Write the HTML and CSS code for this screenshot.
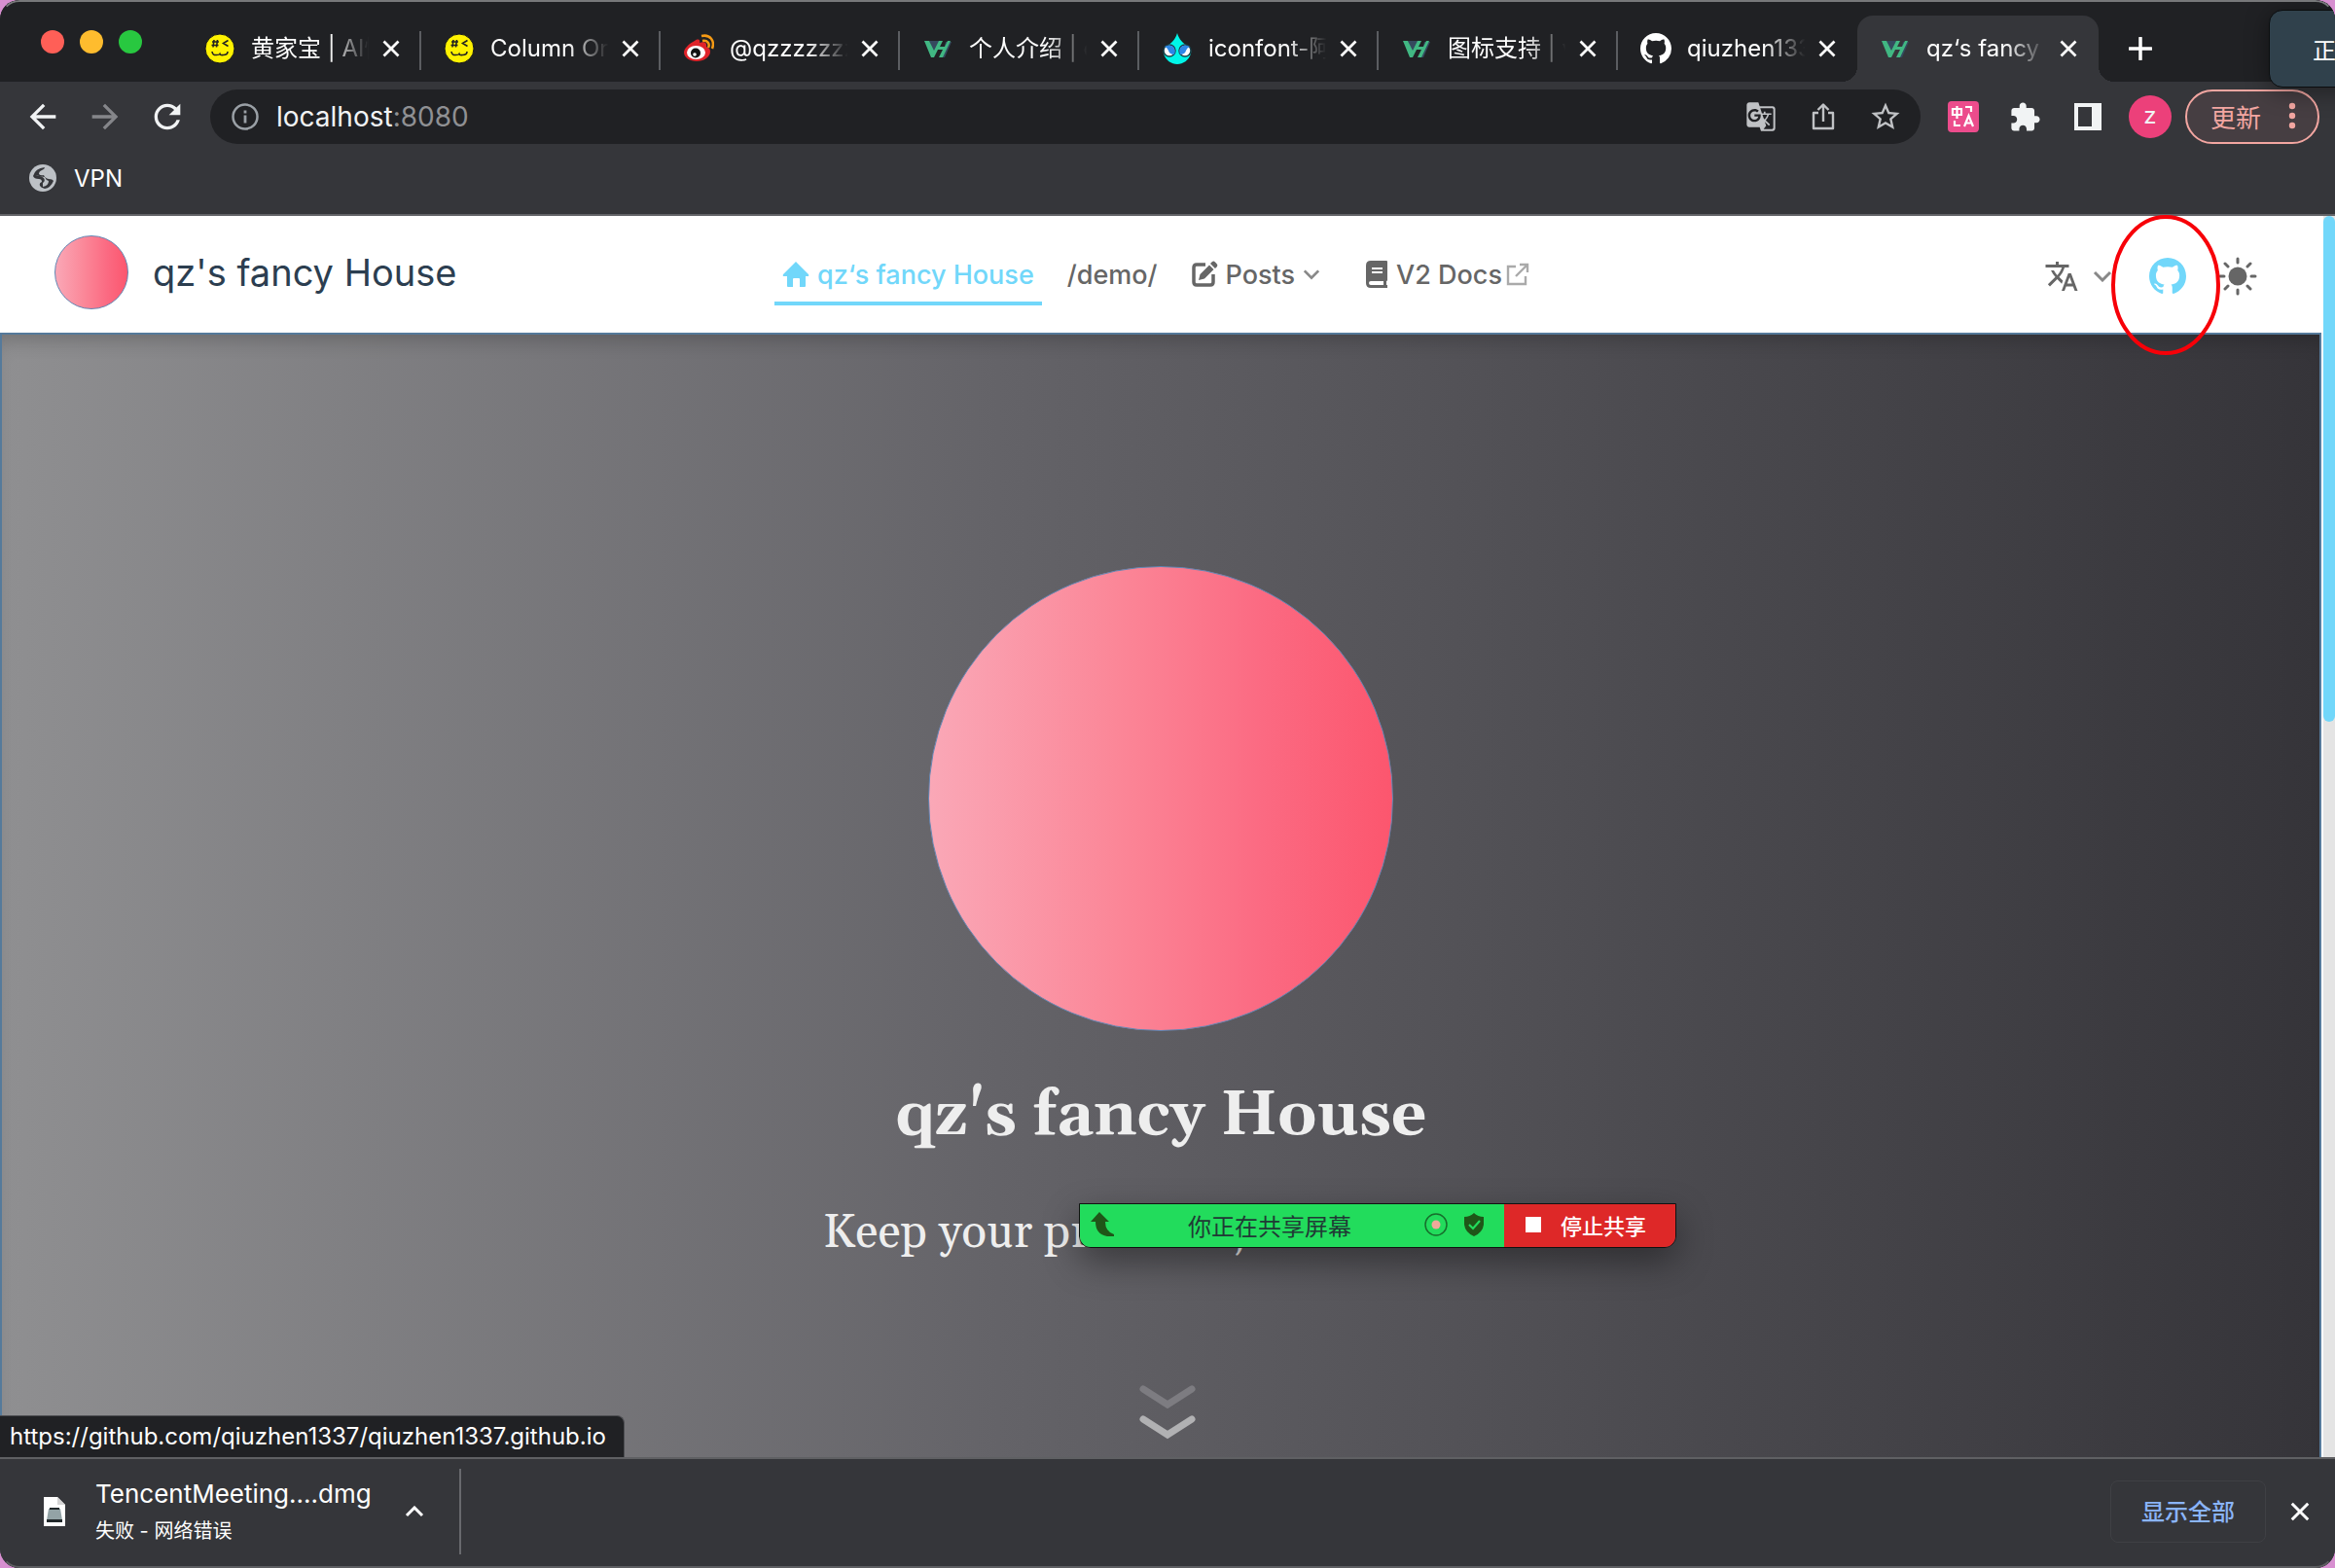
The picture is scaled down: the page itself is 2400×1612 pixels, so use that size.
FILE: index.html
```html
<!DOCTYPE html>
<html lang="zh-CN">
<head>
<meta charset="utf-8">
<title>qz's fancy House</title>
<link rel="stylesheet" href="styles.css">
</head>
<body>
<svg class="defs" aria-hidden="true">
  <symbol id="close" viewBox="0 0 16 16"><path d="M2 2 14 14M14 2 2 14" fill="none" stroke="currentColor" stroke-width="2.2"/></symbol>
  <symbol id="face" viewBox="0 0 32 32"><circle cx="16" cy="16" r="15" fill="#fff200" stroke="#17181a" stroke-width="1"/><path d="M8 9h7M7.500 12.500h7M10 7l-1 7.500M13.500 7l-1 7.500M24.500 7.500 19.500 10.500 24.500 13.500M8 19q.5 4 4.500 3.500 3 0 3.500-1 .5 1.500 3.500 1 4.500 0 4.500-3.500" fill="none" stroke="#222" stroke-width="1.600"/></symbol>
  <symbol id="vh" viewBox="0 0 32 32"><path d="M7 8h11l-5 11h-2z" fill="#35495e"/><path d="M24 9h6l-7 16h-3z" fill="#35495e"/><path d="M2 8h5l5 10 5-10h4l-3 6h5l3-6h3l-8 17h-4l4-8h-5l-4 8h-3z" fill="#41b883"/></symbol>
  <symbol id="github" viewBox="0 0 16 16"><path fill="currentColor" d="M8 0C3.580 0 0 3.580 0 8c0 3.540 2.290 6.530 5.470 7.590.4.070.55-.17.55-.38 0-.19-.01-.82-.01-1.490-2.010.37-2.530-.49-2.690-.94-.09-.23-.48-.94-.82-1.130-.28-.15-.68-.52-.01-.53.63-.01 1.080.58 1.230.82.72 1.210 1.870.87 2.330.66.07-.52.28-.87.51-1.070-1.780-.2-3.640-.89-3.640-3.950 0-.87.31-1.590.82-2.150-.08-.2-.36-1.020.08-2.120 0 0 .67-.21 2.200.82.64-.18 1.320-.27 2-.27s1.360.09 2 .27c1.530-1.040 2.200-.82 2.200-.82.44 1.100.16 1.920.08 2.120.51.56.82 1.270.82 2.150 0 3.070-1.870 3.750-3.650 3.950.29.25.54.73.54 1.480 0 1.070-.01 1.930-.01 2.200 0 .21.15.46.55.38A8.010 8.010 0 0 0 16 8c0-4.420-3.580-8-8-8z"/></symbol>
  <symbol id="down" viewBox="0 0 20 12"><path d="M2 2l8 8 8-8" fill="none" stroke="currentColor" stroke-width="3"/></symbol>
</svg>

<header class="browser">
  <div class="tabstrip">
    <div class="lights"><i class="light red"></i><i class="light amber"></i><i class="light green"></i></div>
    <div class="tabs">
      <div class="tab"><svg class="fav"><use href="#face"/></svg><span class="tab-title">黄家宝 | AI情</span><button class="icon-btn" aria-label="关闭"><svg class="x"><use href="#close"/></svg></button></div>
      <div class="tab"><svg class="fav"><use href="#face"/></svg><span class="tab-title">Column Ord</span><button class="icon-btn" aria-label="关闭"><svg class="x"><use href="#close"/></svg></button></div>
      <div class="tab"><svg class="fav" viewBox="0 0 32 32"><path d="M12 8c4-3 6-1 5 2 5-2 8 0 7 4 3 1 4 3 4 5 0 6-7 10-14 10S1 25 1 20c0-4 5-9 11-12z" fill="#e02329"/><ellipse cx="13.500" cy="20" rx="9.500" ry="7" fill="#fff"/><circle cx="13" cy="20.500" r="5" fill="#111"/><circle cx="12" cy="22" r="1.800" fill="#fff"/><path d="M20 8c5-1 8 3 6 7M19 3c9-2 14 5 11 13" fill="none" stroke="#f59a14" stroke-width="2.500"/></svg><span class="tab-title">@qzzzzzzz</span><button class="icon-btn" aria-label="关闭"><svg class="x"><use href="#close"/></svg></button></div>
      <div class="tab"><svg class="fav"><use href="#vh"/></svg><span class="tab-title">个人介绍 | q</span><button class="icon-btn" aria-label="关闭"><svg class="x"><use href="#close"/></svg></button></div>
      <div class="tab"><svg class="fav" viewBox="0 0 32 32"><path d="M16 0c2 7 6 10 10 13q5 3 4 8c-2 7-8 11-14 11S4 28 2 21q-1-5 4-8c4-3 8-6 10-13z" fill="#00f5e8"/><g stroke="#1a3f48" stroke-width="1.500"><circle cx="8" cy="18" r="6" fill="#fff"/><circle cx="24" cy="18" r="6" fill="#fff"/></g><path d="M3 14q5-3 9 0 3 4 1 8-5 0-6-4-1-3-4-4zM29 14q-5-3-9 0-3 4-1 8 5 0 6-4 1-3 4-4z" fill="#2c86e8"/></svg><span class="tab-title">iconfont-阿</span><button class="icon-btn" aria-label="关闭"><svg class="x"><use href="#close"/></svg></button></div>
      <div class="tab"><svg class="fav"><use href="#vh"/></svg><span class="tab-title">图标支持 | v</span><button class="icon-btn" aria-label="关闭"><svg class="x"><use href="#close"/></svg></button></div>
      <div class="tab last"><svg class="fav"><use href="#github"/></svg><span class="tab-title">qiuzhen133</span><button class="icon-btn" aria-label="关闭"><svg class="x"><use href="#close"/></svg></button></div>
      <div class="tab active"><svg class="fav"><use href="#vh"/></svg><span class="tab-title">qz‘s fancy</span><button class="icon-btn" aria-label="关闭"><svg class="x"><use href="#close"/></svg></button></div>
    </div>
    <button class="icon-btn plus" aria-label="新标签页"><svg width="24" height="24" viewBox="0 0 24 24"><path d="M12 1v22M1 12h22" stroke="currentColor" stroke-width="3.500" stroke-linecap="round"/></svg></button>
  </div>

  <div class="toolbar">
    <div class="history">
      <button class="icon-btn" aria-label="后退"><svg class="i40" viewBox="0 0 24 24"><path fill="currentColor" d="M20 11H7.830l5.590-5.590L12 4l-8 8 8 8 1.410-1.410L7.830 13H20v-2z"/></svg></button>
      <button class="icon-btn dim" aria-label="前进"><svg class="i40" viewBox="0 0 24 24"><path fill="currentColor" d="M4 11h12.170l-5.590-5.590L12 4l8 8-8 8-1.410-1.410L16.170 13H4v-2z"/></svg></button>
      <button class="icon-btn" aria-label="刷新"><svg class="i40" viewBox="0 0 24 24"><path fill="currentColor" d="M17.650 6.350C16.200 4.900 14.210 4 12 4c-4.420 0-7.990 3.580-7.990 8s3.570 8 7.990 8c3.730 0 6.840-2.550 7.730-6h-2.080c-.82 2.330-3.040 4-5.650 4-3.310 0-6-2.690-6-6s2.690-6 6-6c1.660 0 3.140.69 4.220 1.780L13 11h7V4l-2.350 2.350z"/></svg></button>
    </div>
    <div class="omnibox">
      <svg class="info" viewBox="0 0 28 28"><circle cx="14" cy="14" r="12.500" fill="none" stroke="#9aa0a6" stroke-width="2.500"/><path d="M14 12.500v8M14 7.500v3" stroke="#9aa0a6" stroke-width="2.800"/></svg>
      <span class="url">localhost<span class="port">:8080</span></span>
      <div class="omni-icons">
        <button class="icon-btn" aria-label="翻译"><svg class="i32" viewBox="0 0 24 24"><path fill="currentColor" d="M21 4H11l-1-3H3c-1.100 0-2 .9-2 2v15c0 1.100.9 2 2 2h8l1 3h9c1.100 0 2-.9 2-2V6c0-1.100-.9-2-2-2zM7 16c-2.760 0-5-2.240-5-5s2.240-5 5-5c1.350 0 2.480.5 3.350 1.300L9.030 8.570c-.38-.36-1.040-.78-2.030-.78-1.740 0-3.150 1.440-3.150 3.210S5.260 14.210 7 14.210c2.010 0 2.840-1.440 2.920-2.410H7v-1.710h4.680c.07.31.12.61.12 1.020C11.800 13.970 9.890 16 7 16zm6.170-5.420h3.700c-.43 1.250-1.110 2.430-2.050 3.470-.31-.35-.6-.72-.86-1.100l-.79-2.370zm8.330 9.920c0 .55-.45 1-1 1H14l2-2.500-1.040-3.100 3.100 3.100.92-.92-3.300-3.250.02-.02c1.130-1.250 1.930-2.690 2.400-4.220H20v-1.300h-4.530V8h-1.290v1.290h-1.440L11.460 5.500h9.040c.55 0 1 .45 1 1v14z"/></svg></button>
        <button class="icon-btn" aria-label="分享"><svg class="i32" viewBox="0 0 32 32"><path d="M11 12H6v16h20V12h-5M16 21V4M10.500 9 16 3.500 21.500 9" fill="none" stroke="currentColor" stroke-width="2.400" stroke-linejoin="round"/></svg></button>
        <button class="icon-btn" aria-label="收藏"><svg class="i32" viewBox="1 1 22 22"><path fill="currentColor" d="M22 9.240l-7.190-.62L12 2 9.190 8.630 2 9.240l5.460 4.730L5.820 21 12 17.270 18.180 21l-1.630-7.030L22 9.240zM12 15.400l-3.760 2.270 1-4.280-3.320-2.880 4.380-.38L12 6.100l1.710 4.040 4.380.38-3.320 2.880 1 4.280L12 15.400z"/></svg></button>
      </div>
    </div>
    <div class="ext">
      <button class="icon-btn" aria-label="沉浸式翻译"><svg class="i32" viewBox="0 0 32 32"><rect width="32" height="32" rx="4" fill="#ec4c8c"/><path d="M5 8h9v6H5zM9.500 5v13M18 6h6v5M7 20v5h6M17 26l4.500-11L26 26M18.500 22.500h6" fill="none" stroke="#fff" stroke-width="2.200"/></svg></button>
      <button class="icon-btn" aria-label="扩展程序"><svg class="i32" viewBox="1 0 23 23"><path fill="currentColor" d="M20.500 11H19V7c0-1.100-.9-2-2-2h-4V3.500C13 2.120 11.880 1 10.500 1S8 2.120 8 3.500V5H4c-1.100 0-1.990.9-1.990 2v3.800H3.500c1.490 0 2.700 1.210 2.700 2.700s-1.210 2.700-2.700 2.700H2V20c0 1.100.9 2 2 2h3.800v-1.500c0-1.490 1.210-2.700 2.700-2.700 1.490 0 2.700 1.210 2.700 2.700V22H17c1.100 0 2-.9 2-2v-4h1.500c1.380 0 2.500-1.120 2.500-2.500S21.880 11 20.500 11z"/></svg></button>
      <button class="icon-btn" aria-label="侧边栏"><svg class="i32" viewBox="0 0 32 32"><path fill="currentColor" fill-rule="evenodd" d="M2 2h28v28H2zM6 6v20h14V6z"/></svg></button>
      <button class="avatar">z</button>
    </div>
    <button class="update">更新<svg width="8" height="28" viewBox="0 0 8 28"><circle cx="4" cy="4" r="3.200" fill="currentColor"/><circle cx="4" cy="14" r="3.200" fill="currentColor"/><circle cx="4" cy="24" r="3.200" fill="currentColor"/></svg></button>
  </div>

  <div class="bookmarks">
    <a class="bookmark" href="#"><svg width="28" height="28" viewBox="0 0 28 28"><circle cx="14" cy="14" r="14" fill="#bdc1c6"/><path d="M16 3Q6 4 4 12q1 3 6 3 3 0 3 3-3 1-2 4 1 2 5 3 6-1 9-8-1-2-5-2-4-1-5-4-3 1-5-1 0-3 3-4 3-1 3-3z" fill="#35363a"/><path d="M6 12q6-1 9 2 2 3-1 5v4q6-1 6-6-3-1-4-4-2 0-4-1z" fill="#bdc1c6"/></svg>VPN</a>
  </div>
</header>

<main class="viewport">
  <nav class="site-nav">
    <a class="brand" href="#"><i class="brand-logo"></i>qz's fancy House</a>
    <div class="links">
      <a class="link current" href="#"><svg width="28" height="28" viewBox="0 0 28 28"><path d="M14 1 27 14q1 2-1 2h-2v10q0 1-1 1h-5v-8q0-1-1-1h-5q-1 0-1 1v8H6q-1 0-1-1V16H2q-2 0-1-2z" fill="currentColor"/></svg>qz‘s fancy House</a>
      <a class="link" href="#">/demo/</a>
      <a class="link" href="#"><svg width="28" height="28" viewBox="0 0 28 28"><path d="M15 4H6Q3 4 3 7v15q0 3 3 3h14q3 0 3-3v-8" fill="none" stroke="currentColor" stroke-width="3.500"/><path d="m8 20 1.500-6L19 4.500l4.500 4.500-9.500 9.500zM20 3l2-2q1.500-1 3 .5l1.500 1.500q1.500 1.500.5 3l-2 2z" fill="currentColor"/></svg>Posts<svg class="caret"><use href="#down"/></svg></a>
      <a class="link docs" href="#"><svg width="24" height="28" viewBox="0 0 24 28"><path fill="currentColor" fill-rule="evenodd" d="M6 0h16q1 0 1 1v19q0 1-1 1v4h1v3H6q-5 0-5-5V5q0-5 5-5zm1 7v2h11V7zm0 4v2h11v-2zM6 21q-2 0-2 2t2 2h13v-4z"/></svg><span>V2 Docs</span><svg class="out" viewBox="0 0 24 24"><path d="M10 4H2v18h18v-8M14 2h8v8M22 2 10 14" fill="none" stroke="currentColor" stroke-width="2.400"/></svg></a>
    </div>
    <div class="tools">
      <button class="icon-btn lang" aria-label="选择语言"><svg width="36" height="36" viewBox="0 0 24 24"><path fill="currentColor" d="M12.870 15.070l-2.540-2.510.03-.03c1.740-1.940 2.980-4.170 3.710-6.530H17V4h-7V2H8v2H1v1.990h11.170C11.500 7.920 10.440 9.750 9 11.350 8.070 10.320 7.300 9.190 6.690 8h-2c.73 1.630 1.730 3.170 2.980 4.560l-5.090 5.020L4 19l5-5 3.110 3.110.76-2.040zM18.500 10h-2L12 22h2l1.120-3h4.750L21 22h2l-4.500-12zm-2.620 7l1.620-4.330L19.120 17h-3.240z"/></svg><svg class="caret wide"><use href="#down"/></svg></button>
      <a class="repo" href="https://github.com/qiuzhen1337/qiuzhen1337.github.io" aria-label="GitHub"><svg width="38" height="38"><use href="#github"/></svg><svg class="ring" viewBox="0 0 112 144"><ellipse cx="56" cy="72" rx="54" ry="70" fill="none" stroke="#f70008" stroke-width="4"/></svg></a>
      <button class="icon-btn" aria-label="外观"><svg width="40" height="40" viewBox="0 0 40 40"><circle cx="20" cy="20" r="9.500" fill="currentColor"/><path d="M20 2v4M20 34v4M2 20h4M34 20h4M7 7l3 3M30 30l3 3M7 33l3-3M30 10l3-3" stroke="currentColor" stroke-width="3" stroke-linecap="round"/></svg></button>
    </div>
  </nav>
  <section class="hero">
    <div class="hero-logo"></div>
    <h1 class="hero-title">qz's fancy House</h1>
    <p class="hero-text">Keep your promises,</p>
    <button class="icon-btn scroll-down" aria-label="向下滚动"><svg width="60" height="60" viewBox="0 0 60 60"><path d="M5 6 30 22 55 6" fill="none" stroke="#7d7c81" stroke-width="7" stroke-linecap="round"/><path d="M5 37 30 53 55 37" fill="none" stroke="#b1b1b3" stroke-width="7" stroke-linecap="round"/></svg></button>
  </section>
  <div class="scrollbar"><i class="thumb"></i></div>
  <div class="status">https://github.com/qiuzhen1337/qiuzhen1337.github.io</div>
</main>

<footer class="downloads">
  <svg width="24" height="32" viewBox="0 0 24 32"><path d="M1 1h14l8 8v22H1z" fill="#fff"/><path d="M15 1v8h8" fill="#d5d5d5"/><path d="M6 13h12l2 12H4z" fill="#93a3a6"/><path d="M7 12h10v2H7zM4 24h16v3H4z" fill="#22292b"/></svg>
  <div class="file"><span class="file-name">TencentMeeting....dmg</span><span class="file-state">失败 - 网络错误</span></div>
  <button class="icon-btn up" aria-label="更多"><svg width="20" height="12" viewBox="0 0 20 12"><path d="m2 10 8-8 8 8" fill="none" stroke="currentColor" stroke-width="3"/></svg></button>
  <button class="show-all">显示全部</button>
  <button class="icon-btn" aria-label="关闭"><svg class="x big"><use href="#close"/></svg></button>
</footer>

<aside class="share">
  <div class="share-info">
    <svg width="26" height="26" viewBox="0 0 26 26"><path d="M10 0 20 10h-4q0 10 9 13v2H18Q6 23 6 10H1z" fill="#1f5618"/></svg>
    <span class="share-text">你正在共享屏幕</span>
    <svg width="24" height="24" viewBox="0 0 24 24"><circle cx="12" cy="12" r="11" fill="none" stroke="#176e2c" stroke-width="1.500"/><circle cx="12" cy="12" r="4.500" fill="#efa99a"/></svg>
    <svg width="22" height="24" viewBox="0 0 22 24"><path d="M11 0q4 4 10 4v8q-1 8-10 12Q2 20 1 12V4q6 0 10-4z" fill="#1f5618"/><path d="m6 12 4 4 7-8" fill="none" stroke="#22dc5c" stroke-width="2.200"/></svg>
  </div>
  <button class="stop"><i class="square"></i>停止共享</button>
</aside>
<aside class="toast">正在</aside>
</body>
</html>
```
FILE: styles.css
```css
* { box-sizing: border-box; }
html { background: #d78fd0; }
body {
  position: relative;
  display: flex;
  flex-direction: column;
  min-height: 100vh;
  margin: 0;
  overflow: hidden;
  background: #35363a;
  border-radius: 20px;
  color: #fff;
  font-family: Inter, "Noto Sans CJK SC", sans-serif;
  font-size: 24px;
}
body::after {
  content: "";
  position: absolute;
  inset: 0;
  border: 2px solid #77787a;
  border-color: #77787a transparent #5d5e61;
  border-radius: 20px;
  pointer-events: none;
}
svg { display: block; flex: none; }
a { color: inherit; text-decoration: none; }
button { font: inherit; color: inherit; margin: 0; cursor: pointer; }
.defs { position: absolute; width: 0; height: 0; }
.icon-btn { display: flex; align-items: center; padding: 0; border: 0; background: none; }

/* tab strip */
.tabstrip { display: flex; align-items: flex-end; height: 84px; padding-left: 42px; background: #202124; }
.lights { display: flex; gap: 16px; width: 145px; padding-bottom: 29px; }
.light { width: 24px; height: 24px; border-radius: 50%; }
.red { background: #ff5f57; }
.amber { background: #febc2e; }
.green { background: #28c840; }
.tabs { display: flex; }
.tab { position: relative; display: flex; align-items: center; width: 246px; height: 68px; padding: 0 21px 0 23px; }
.tab:not(.last):not(.active)::after { content: ""; position: absolute; right: 0; top: 16px; width: 2px; height: 40px; background: #5b5d61; }
.fav { width: 32px; height: 32px; margin-right: 16px; }
.tab-title {
  flex: 1;
  overflow: hidden;
  margin-right: 10px;
  white-space: nowrap;
  line-height: 36px;
  -webkit-mask-image: linear-gradient(90deg, #000 64%, transparent 98%);
  mask-image: linear-gradient(90deg, #000 64%, transparent 98%);
}
.x { width: 20px; height: 20px; }
.x.big { width: 22px; height: 22px; }
.tab.active { width: 248px; background: #35363a; border-radius: 16px 16px 0 0; }
.tab.active::before {
  content: "";
  position: absolute;
  left: -16px;
  right: -16px;
  bottom: 0;
  height: 16px;
  background:
    radial-gradient(circle at 0 0, transparent 16px, #35363a 16px) left / 16px 16px no-repeat,
    radial-gradient(circle at 100% 0, transparent 16px, #35363a 16px) right / 16px 16px no-repeat;
}
.plus { height: 68px; margin-left: 31px; }

/* toolbar */
.toolbar { display: flex; align-items: center; height: 72px; padding: 0 16px 0 24px; color: #f1f3f4; }
.history { display: flex; gap: 24px; width: 192px; }
.dim { color: #85868a; }
.i40 { width: 40px; height: 40px; }
.i32 { width: 32px; height: 32px; }
.omnibox { display: flex; flex: 1; align-items: center; height: 56px; padding: 0 20px 0 22px; background: #202124; border-radius: 28px; }
.info { width: 28px; height: 28px; margin-right: 18px; }
.url { flex: 1; font-size: 28px; }
.port { color: #8f9093; }
.omni-icons { display: flex; gap: 32px; color: #c0c2c5; }
.ext { display: flex; align-items: center; gap: 32px; margin: 0 14px 0 28px; }
.avatar { width: 44px; height: 44px; margin-left: -6px; padding: 0 0 4px; border: 0; border-radius: 50%; background: #ec407a; }
.update { display: flex; align-items: center; justify-content: space-between; width: 138px; height: 56px; padding: 0 22px 2px 24px; border: 2px solid #f2a6a1; border-radius: 28px; background: #463e42; color: #f2a6a1; font-size: 26px; }

.bookmarks { display: flex; height: 66px; padding: 0 30px 10px; border-bottom: 2px solid #626367; }
.bookmark { display: flex; align-items: center; gap: 18px; }

/* page */
.viewport { position: relative; display: grid; flex: 1; grid-template: 120px 1fr / 1fr 14px; background: #fff; }
.site-nav { display: grid; grid-template-columns: 1fr auto 1fr; align-items: center; padding: 0 66px 0 56px; color: #666; }
.brand { display: flex; align-items: center; gap: 25px; padding-bottom: 4px; color: #2c3e50; font-size: 38px; }
.brand-logo, .hero-logo { border: 1px solid #6387b4; border-radius: 50%; background: linear-gradient(90deg, #faa8b7, #fb8798 40%, #fb6a82 72%, #fc566e); }
.brand-logo { width: 76px; height: 76px; }
.links { display: flex; gap: 18px; font-size: 27px; font-weight: 500; white-space: nowrap; }
.link { display: flex; align-items: center; height: 64px; padding: 4px 8px 0; gap: 8px; border-bottom: 4px solid transparent; }
.link.current { border-color: #71d7fa; color: #71d7fa; }
.link.docs { margin-left: 12px; }
.docs .out { margin-left: -4px; }
.caret { width: 18px; height: 12px; color: #888; }
.caret.wide { width: 20px; }
.out { width: 24px; height: 24px; color: #aaa; }
.tools { display: flex; align-items: center; justify-content: flex-end; padding-top: 4px; }
.lang { gap: 14px; margin-right: 38px; }
.repo { position: relative; margin-right: 33px; color: #71d7fa; }
.ring { position: absolute; left: -39px; top: -44px; z-index: 2; width: 112px; height: 144px; }
.hero {
  grid-area: 2 / 1;
  display: flex;
  flex-direction: column;
  align-items: center;
  padding-top: 238px;
  border: 2px solid #557a9b;
  border-bottom: 0;
  background: linear-gradient(90deg, #8f8f91, #646368 43%, #4b4a4f 72%, #353439);
  box-shadow: inset 0 16px 20px -10px #0003;
  color: #eee;
  font-family: Georgia, Gelasio, "Liberation Serif", serif;
}
.hero-logo { width: 478px; height: 478px; }
.hero-title { margin: 44px 0 0; font-size: 64px; line-height: 88px; }
.hero-text { width: 694px; margin: 44px 0 0; font-size: 48px; line-height: 64px; }
.scroll-down { margin: 122px 0 12px 14px; }
.scrollbar { grid-area: 1 / 2 / 3 / 3; padding-left: 2px; background: #e4e4e4; border-left: 2px solid #fff; }
.thumb { display: block; width: 12px; height: 520px; margin-left: -2px; border-radius: 6px; background: #71d7fa; }
.status { position: absolute; left: 0; bottom: 0; padding: 0 18px 0 10px; border: 1px solid #4d4e52; border-width: 1px 1px 0 0; border-radius: 0 8px 0 0; background: #202124; line-height: 42px; }

/* downloads */
.downloads { display: flex; align-items: center; height: 114px; padding: 0 25px 4px 44px; border-top: 2px solid #5f6063; background: #35363a; }
.file { display: flex; flex-direction: column; width: 318px; padding-left: 30px; }
.file-name { font-size: 26px; line-height: 40px; }
.file-state { font-size: 20px; line-height: 36px; }
.up { width: 58px; height: 88px; margin-left: 30px; border-right: 2px solid #68696d; }
.show-all { width: 160px; height: 64px; margin: 0 24px 0 auto; padding: 0 0 4px; border: 1px solid #3f4044; border-radius: 8px; background: none; color: #8ab4f8; font-weight: 500; }

/* floating windows of the meeting client */
.share { position: absolute; left: 1109px; top: 1237px; display: flex; height: 46px; overflow: hidden; border: 1px solid #111; border-radius: 0 0 12px 12px; box-shadow: 0 14px 36px #0006; }
.share-info { display: flex; align-items: center; width: 436px; padding: 0 20px 2px 10px; background: #22dc5c; color: #203a35; gap: 16px; }
.share-text { flex: 1; text-align: center; }
.stop { display: flex; align-items: center; gap: 20px; width: 176px; padding: 0 0 2px 22px; border: 0; background: #de2828; font-size: 22px; font-weight: 500; }
.square { width: 16px; height: 16px; background: #fff; }
.toast { position: absolute; left: 2332px; top: 10px; width: 100px; height: 80px; padding-left: 44px; border: 1px solid #0b0d0e; border-radius: 14px; background: #30414c; box-shadow: 0 4px 24px #0006; line-height: 84px; white-space: nowrap; }
```
